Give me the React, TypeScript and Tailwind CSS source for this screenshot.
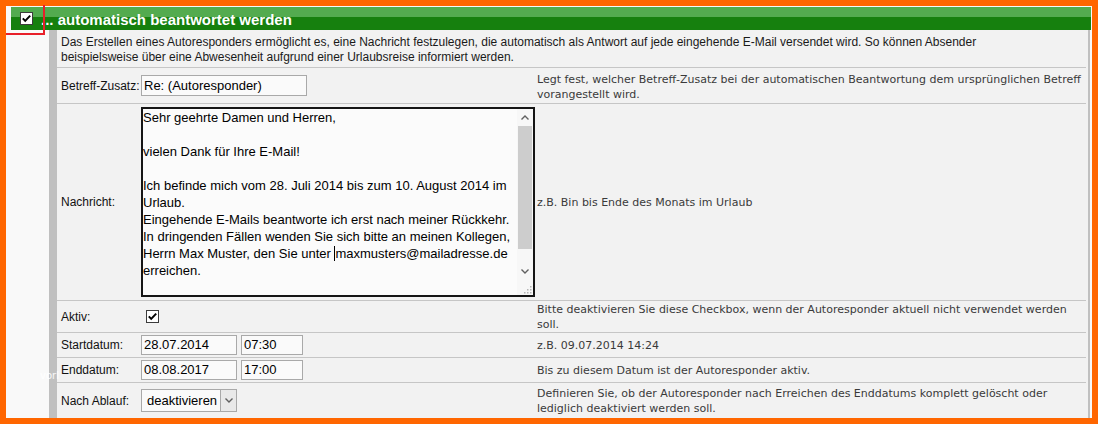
import React from "react";

const SANS = "font-['Liberation_Sans',Arial,sans-serif]";
const VERD = "font-['DejaVu_Sans',Verdana,sans-serif]";

function Check() {
  return (
    <svg width="13" height="13" viewBox="0 0 13 13" className="block">
      <rect x="0.5" y="0.5" width="12" height="12" fill="#fff" stroke="#3c3c3c" />
      <path d="M2.8 6.4 L5.2 8.9 L10.2 3.6" fill="none" stroke="#000" strokeWidth="2" />
    </svg>
  );
}

function Chevron({ up }: { up?: boolean }) {
  return (
    <svg width="8" height="5" viewBox="0 0 8 5" className="block">
      <path d={up ? "M0.5 4.5 L4 1 L7.5 4.5" : "M0.5 0.5 L4 4 L7.5 0.5"} fill="none" stroke="#606060" strokeWidth="1.4" />
    </svg>
  );
}

const labelCls = `pl-[4px] text-[12px] text-[#111] whitespace-nowrap ${SANS}`;
const helpCls = `pl-[2px] text-[11px] leading-[15px] text-[#3a3a3a] whitespace-nowrap ${VERD}`;
const rowCls = "grid grid-cols-[82px_396px_1fr] items-center border-t border-[#c6c6c6]";
const fieldCls = `border border-[#a9a9a9] bg-[#fafafa] px-[2px] text-[13px] text-black whitespace-nowrap ${SANS}`;

const lines = [
  "Sehr geehrte Damen und Herren,",
  "",
  "vielen Dank für Ihre E-Mail!",
  "",
  "Ich befinde mich vom 28. Juli 2014 bis zum 10. August 2014 im",
  "Urlaub.",
  "Eingehende E-Mails beantworte ich erst nach meiner Rückkehr.",
  "In dringenden Fällen wenden Sie sich bitte an meinen Kollegen,",
  "CARET",
  "erreichen.",
];

export default function App() {
  return (
    <div className="relative w-[1098px] h-[424px] bg-[#ff6600] p-[6px] overflow-hidden">
      <div className="relative h-full bg-[#f9f9f9] flex flex-col">
        {/* header */}
        <div className="mt-[1px] ml-[5px] mr-[1px] h-[23px] flex items-center bg-[linear-gradient(#53ab4f_0,#53ab4f_44%,#16800e_44%,#16800e_100%)]">
          <div className="ml-[9px]">
            <Check />
          </div>
          <div className={`ml-[8px] mt-[2px] text-[15px] leading-[18px] font-bold text-white whitespace-nowrap ${SANS}`}>
            ... automatisch beantwortet werden
          </div>
        </div>

        {/* body */}
        <div className="flex-1 flex min-h-0">
          <div className="w-[43px] bg-[#f9f9f9]" />
          <div className="w-[8px] bg-[#c0c0c0]" />
          <div className="flex-1 bg-[#f2f2f2] border-r-2 border-[#c0c0c0] mr-[2px] flex flex-col overflow-hidden">
            <div className={`pl-[4px] pt-[5px] pb-[2px] text-[12px] leading-[15px] text-[#1a1a1a] whitespace-nowrap ${SANS}`}>
              Das Erstellen eines Autoresponders ermöglicht es, eine Nachricht festzulegen, die automatisch als Antwort auf jede eingehende E-Mail versendet wird. So können Absender
              <br />
              beispielsweise über eine Abwesenheit aufgrund einer Urlaubsreise informiert werden.
            </div>

            <div className="mr-[2px] flex flex-col">
              {/* Betreff */}
              <div className={`${rowCls} h-[36px]`}>
                <div className={labelCls}>Betreff-Zusatz:</div>
                <div className="pl-[2px]">
                  <div className={`${fieldCls} w-[166px] h-[21px] leading-[19px]`}>Re: (Autoresponder)</div>
                </div>
                <div className={`${helpCls} pt-[3px]`}>
                  Legt fest, welcher Betreff-Zusatz bei der automatischen Beantwortung dem ursprünglichen Betreff
                  <br />
                  vorangestellt wird.
                </div>
              </div>

              {/* Nachricht */}
              <div className={`${rowCls} h-[197px]`}>
                <div className={labelCls}>Nachricht:</div>
                <div className="pl-[2px]">
                  <div className="w-[394px] h-[190px] border-2 border-[#151515] bg-[#fbfbfb] flex">
                    <div className={`flex-1 text-[13px] leading-[17px] text-black ${SANS}`}>
                      {lines.map((l, i) =>
                        l === "CARET" ? (
                          <div key={i} className="h-[17px] whitespace-nowrap flex items-center">
                            <span>Herrn Max Muster, den Sie unter&nbsp;</span>
                            <span className="inline-block w-[1px] h-[15px] bg-black" />
                            <span>maxmusters@mailadresse.de</span>
                          </div>
                        ) : (
                          <div key={i} className="h-[17px] whitespace-nowrap">
                            {l}
                          </div>
                        )
                      )}
                    </div>
                    <div className="w-[16px] flex flex-col bg-[#f7f7f7]">
                      <div className="h-[17px] flex items-center justify-center">
                        <Chevron up />
                      </div>
                      <div className="h-[123px] mx-[1px] bg-[#cdcdcd]" />
                      <div className="flex-1" />
                      <div className="h-[17px] flex items-center justify-center">
                        <Chevron />
                      </div>
                      <div className="h-[15px] flex items-end justify-end pr-[1px] pb-[1px]">
                        <svg width="9" height="9" viewBox="0 0 9 9" className="block">
                          <rect x="7" y="1" width="1.5" height="1.5" fill="#b5b5b5" />
                          <rect x="4" y="4" width="1.5" height="1.5" fill="#b5b5b5" />
                          <rect x="7" y="4" width="1.5" height="1.5" fill="#b5b5b5" />
                          <rect x="1" y="7" width="1.5" height="1.5" fill="#b5b5b5" />
                          <rect x="4" y="7" width="1.5" height="1.5" fill="#b5b5b5" />
                          <rect x="7" y="7" width="1.5" height="1.5" fill="#b5b5b5" />
                        </svg>
                      </div>
                    </div>
                  </div>
                </div>
                <div className={helpCls}>z.B. Bin bis Ende des Monats im Urlaub</div>
              </div>

              {/* Aktiv */}
              <div className={`${rowCls} h-[32px]`}>
                <div className={labelCls}>Aktiv:</div>
                <div className="pl-[7px]">
                  <Check />
                </div>
                <div className={helpCls}>
                  Bitte deaktivieren Sie diese Checkbox, wenn der Autoresponder aktuell nicht verwendet werden
                  <br />
                  soll.
                </div>
              </div>

              {/* Startdatum */}
              <div className={`${rowCls} h-[25px]`}>
                <div className={labelCls}>Startdatum:</div>
                <div className="pl-[2px] flex gap-[4px]">
                  <div className={`${fieldCls} w-[96px] h-[20px] leading-[18px]`}>28.07.2014</div>
                  <div className={`${fieldCls} w-[62px] h-[20px] leading-[18px]`}>07:30</div>
                </div>
                <div className={helpCls}>z.B. 09.07.2014 14:24</div>
              </div>

              {/* Enddatum */}
              <div className={`${rowCls} h-[25px]`}>
                <div className={labelCls}>Enddatum:</div>
                <div className="pl-[2px] flex gap-[4px]">
                  <div className={`${fieldCls} w-[96px] h-[20px] leading-[18px]`}>08.08.2017</div>
                  <div className={`${fieldCls} w-[62px] h-[20px] leading-[18px]`}>17:00</div>
                </div>
                <div className={helpCls}>Bis zu diesem Datum ist der Autoresponder aktiv.</div>
              </div>

              {/* Nach Ablauf */}
              <div className={`${rowCls} h-[36px]`}>
                <div className={labelCls}>Nach Ablauf:</div>
                <div className="pl-[2px]">
                  <div className={`w-[96px] h-[23px] border border-[#a9a9a9] bg-[#fafafa] flex ${SANS}`}>
                    <div className="flex-1 pl-[5px] text-[13px] leading-[21px] text-black">deaktivieren</div>
                    <div className="w-[16px] border-l border-[#a9a9a9] bg-[#e9e9e9] flex items-center justify-center">
                      <Chevron />
                    </div>
                  </div>
                </div>
                <div className={helpCls}>
                  Definieren Sie, ob der Autoresponder nach Erreichen des Enddatums komplett gelöscht oder
                  <br />
                  lediglich deaktiviert werden soll.
                </div>
              </div>
            </div>
          </div>
        </div>

        {/* red highlight */}
        <div className="absolute left-0 top-[-1px] w-[39px] h-[30px] border-r-2 border-b-2 border-[#e8202a]" />
        {/* faint watermark */}
        <div className={`absolute left-[34px] top-[362px] text-[10px] text-white/90 ${VERD}`}>vorl</div>
      </div>
    </div>
  );
}
